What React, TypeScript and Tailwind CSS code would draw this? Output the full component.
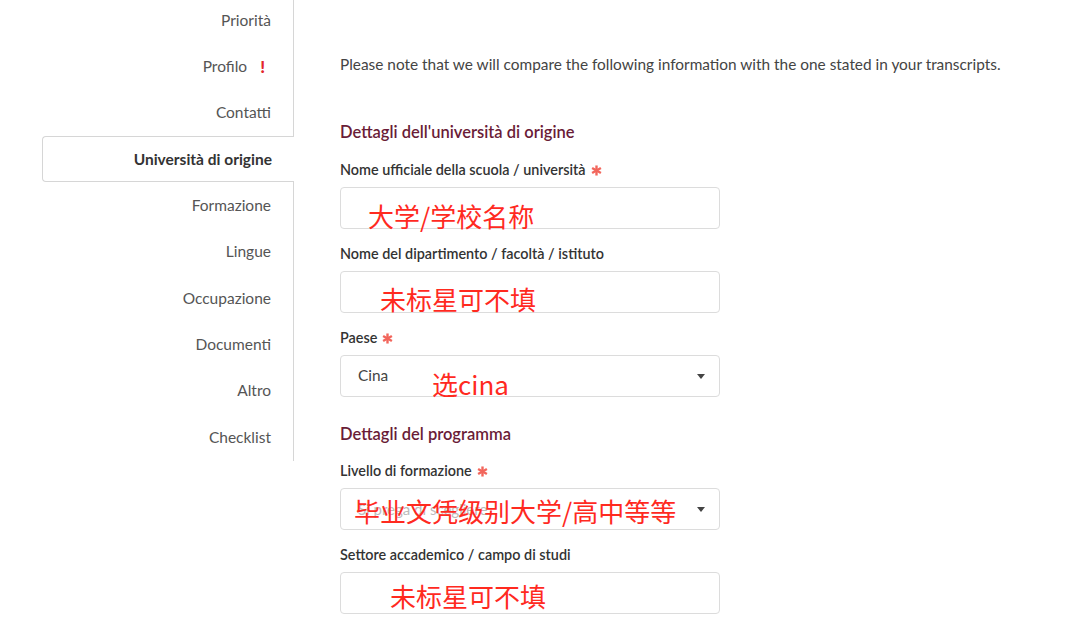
import React from 'react';

const navItems = [
    'Priorità',
    'Profilo',
    'Contatti',
    'Università di origine',
    'Formazione',
    'Lingue',
    'Occupazione',
    'Documenti',
    'Altro',
    'Checklist',
];

const ACTIVE = 'Università di origine';

const Required = () => (
    <svg
        viewBox="0 0 12 12"
        className="ml-[5px] inline-block h-[11px] w-[11px] align-[-1px]"
    >
        <g stroke="#f2665c" strokeWidth="2.6" strokeLinecap="butt">
            <line x1="6" y1="0.5" x2="6" y2="11.5" />
            <line x1="1.2" y1="3.2" x2="10.8" y2="8.8" />
            <line x1="1.2" y1="8.8" x2="10.8" y2="3.2" />
        </g>
    </svg>
);

const Caret = () => (
    <svg viewBox="0 0 8 5" className="h-[5px] w-[8px]">
        <path d="M0 0h8L4 5z" fill="#444" />
    </svg>
);

interface FieldProps {
    label: string;
    required?: boolean;
    select?: boolean;
    value?: string;
    placeholder?: string;
    note?: string;
    noteClass?: string;
}

const Field = ({ label, required, select, value, placeholder, note, noteClass }: FieldProps) => (
    <div className="mb-[16px]">
        <div className="h-[18px] text-[14.4px] leading-[18px] font-semibold text-[#333]">
            {label}
            {required && <Required />}
        </div>
        <div className="relative mt-[8px] flex h-[42px] w-[380px] items-center rounded-[4px] border border-[#dcdcdc] bg-white pl-[17px] pr-[14px]">
            {value && <span className="text-[15.4px] text-[#444]">{value}</span>}
            {placeholder && <span className="text-[15px] text-[#bbb]">{placeholder}</span>}
            {select && (
                <span className="ml-auto flex items-center">
                    <Caret />
                </span>
            )}
            {note && (
                <span
                    className={`absolute whitespace-nowrap text-[26px] leading-[30px] text-[#ff2a1f] ${noteClass ?? ''}`}
                    style={{ fontFamily: '"Noto Sans CJK SC", "Noto Sans", sans-serif' }}
                >
                    {note}
                </span>
            )}
        </div>
    </div>
);

export default function App() {
    return (
        <div
            className="flex h-[620px] w-[1080px] overflow-hidden bg-white text-[#444]"
            style={{ fontFamily: 'Lato, "Noto Sans CJK SC", sans-serif' }}
        >
            <nav className="mt-[-3px] w-[294px] shrink-0 pl-[42px]">
                {navItems.map((item) => {
                    const active = item === ACTIVE;
                    return (
                        <div
                            key={item}
                            className={
                                active
                                    ? 'flex h-[46px] items-center justify-end rounded-l-[4px] border border-r-0 border-[#d6d6d6] pr-[22px] text-[15.5px] font-bold text-[#333]'
                                    : 'flex h-[46.4px] items-center justify-end border-r border-[#d6d6d6] pr-[22px] text-[15.5px] text-[#555]'
                            }
                        >
                            {item}
                            {item === 'Profilo' && (
                                <span className="ml-[13px] mr-[6px] text-[17px] font-black text-[#e3262b]">!</span>
                            )}
                        </div>
                    );
                })}
            </nav>

            <main className="flex-1 pl-[46px]">
                <p className="mt-[53px] text-[15.4px] leading-[22px] text-[#444]">
                    Please note that we will compare the following information with the one stated in your transcripts.
                </p>

                <h2 className="mt-[46px] mb-[18px] text-[16.5px] leading-[22px] font-semibold text-[#6a1c37]">
                    Dettagli dell'università di origine
                </h2>

                <Field
                    label="Nome ufficiale della scuola / università"
                    required
                    note="大学/学校名称"
                    noteClass="left-[27px] top-[13px]"
                />
                <Field
                    label="Nome del dipartimento / facoltà / istituto"
                    note="未标星可不填"
                    noteClass="left-[39px] top-[12px]"
                />
                <Field
                    label="Paese"
                    required
                    select
                    value="Cina"
                    note="选cina"
                    noteClass="left-[91px] top-[13px]"
                />

                <h2 className="mt-[26px] mb-[17px] text-[16.5px] leading-[22px] font-semibold text-[#6a1c37]">
                    Dettagli del programma
                </h2>

                <Field
                    label="Livello di formazione"
                    required
                    select
                    placeholder="Si prega di scegliere"
                    note="毕业文凭级别大学/高中等等"
                    noteClass="left-[13px] top-[7px]"
                />
                <Field
                    label="Settore accademico / campo di studi"
                    note="未标星可不填"
                    noteClass="left-[49px] top-[8px]"
                />
            </main>
        </div>
    );
}
